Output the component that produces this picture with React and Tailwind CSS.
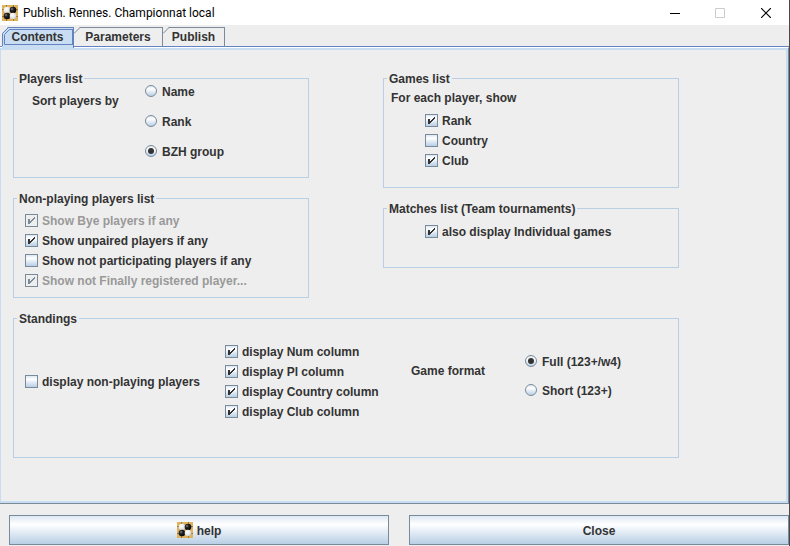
import React from "react";

function GoIcon() {
  return (
    <svg width="16" height="16" viewBox="0 0 16 16" className="shrink-0" aria-hidden="true">
      <defs>
        <radialGradient id="stoneDark" cx="0.35" cy="0.35" r="0.65">
          <stop offset="0" stopColor="#8a8a8a" />
          <stop offset="0.4" stopColor="#222" />
          <stop offset="1" stopColor="#0a0a0a" />
        </radialGradient>
        <radialGradient id="stoneLight" cx="0.4" cy="0.35" r="0.7">
          <stop offset="0" stopColor="#fff" />
          <stop offset="0.6" stopColor="#e8e8e8" />
          <stop offset="1" stopColor="#c4c4c4" />
        </radialGradient>
      </defs>
      <rect width="16" height="16" fill="#dfb25c" />
      <path d="M4.5 0v16M11.5 0v16M0 4.5h16M0 11.5h16" stroke="#a07a34" strokeWidth="1" />
      <circle cx="5" cy="5" r="3.3" fill="url(#stoneLight)" />
      <circle cx="11" cy="5" r="3.3" fill="url(#stoneDark)" />
      <circle cx="5" cy="11" r="3.3" fill="url(#stoneDark)" />
      <circle cx="11" cy="11" r="3.3" fill="url(#stoneLight)" />
    </svg>
  );
}

function Check({ label, checked, disabled }) {
  return (
    <label className="flex h-5 items-center gap-1 whitespace-nowrap has-disabled:text-[#999]">
      <span className="relative flex shrink-0">
        <input
          type="checkbox"
          defaultChecked={checked}
          disabled={disabled}
          className="peer size-[13px] appearance-none border border-[#7a8a99] bg-linear-to-b from-[#dde8f3] via-white via-30% to-[#b8cfe5] disabled:bg-none"
        />
        <svg
          width="13"
          height="13"
          viewBox="0 0 13 13"
          shapeRendering="crispEdges"
          aria-hidden="true"
          className="pointer-events-none absolute inset-0 hidden fill-[#333] peer-checked:block peer-disabled:fill-[#7a8a99]"
        >
          <path d="M3 5h2v2h1v-1h1v-1h1v-1h1v-1h1v2h-1v1h-1v1h-1v1h-1v1h-1v1h-2z" />
        </svg>
      </span>
      <span className="pt-[2px]">{label}</span>
    </label>
  );
}

function Radio({ label, name, checked, className }) {
  return (
    <label className={"flex items-center gap-[5px] whitespace-nowrap " + className}>
      <span className="relative flex shrink-0">
        <input
          type="radio"
          name={name}
          defaultChecked={checked}
          className="peer size-3 appearance-none rounded-full border border-[#7a8a99] bg-linear-to-b from-[#dde8f3] via-white via-30% to-[#b8cfe5]"
        />
        <span className="pointer-events-none absolute inset-[3px] hidden rounded-full bg-[#333] peer-checked:block" />
      </span>
      <span className="pt-[2px]">{label}</span>
    </label>
  );
}

function Group({ title, children }) {
  return (
    <fieldset className="border border-[#b8cfe5]">
      <legend className="ml-[3px] px-[2px] pt-[2px] leading-[11px]">{title}</legend>
      {children}
    </fieldset>
  );
}

function Tab({ label, selected, className }) {
  return (
    <button
      type="button"
      role="tab"
      aria-selected={selected}
      className={
        "relative flex justify-center border-t border-r leading-[18px] " +
        (selected
          ? "h-[21px] border-[#6382bf] bg-[#c8ddf2] "
          : "h-5 border-[#7a8a99] ") +
        className
      }
    >
      <svg
        width="10"
        height="21"
        viewBox="0 0 10 21"
        aria-hidden="true"
        className="absolute -top-px left-0"
        fill="none"
        stroke={selected ? "#6382bf" : "#7a8a99"}
      >
        <path d="M0 0h6L0 6z" fill="#eee" stroke="none" />
        {selected ? (
          <>
            <path d="M6.5 0.5L0.5 6.5V19" />
            <path d="M10 2.5H7.5L2.5 7.5V17.5H10" />
          </>
        ) : (
          <path d="M6 0.5L0 6.5" />
        )}
      </svg>
      {selected && (
        <span className="pointer-events-none absolute top-px right-0 left-[10px] h-4 border-y border-r border-[#6382bf]" />
      )}
      {label}
    </button>
  );
}

const buttonClass =
  "flex h-[30px] flex-1 items-center justify-center gap-1 border border-[#7a8a99] bg-linear-to-b from-[#dde8f3] via-white via-30% to-[#b8cfe5]";

export default function App() {
  return (
    <div className="min-h-screen border-r border-[#4a4a4a] bg-[#eee] font-['Liberation_Sans',Arial,sans-serif] text-xs leading-5 font-bold text-[#333]">
      <header className="flex h-[25px] items-center bg-white pl-[2px] font-[Roboto,'Open_Sans',sans-serif] font-normal text-black">
        <GoIcon />
        <h1 className="ml-[5px] flex-1">Publish. Rennes. Championnat local</h1>
        <div className="flex">
          <button type="button" aria-label="Minimize" className="flex h-6 w-[45px] items-center justify-center">
            <svg width="10" height="10" viewBox="0 0 10 10" shapeRendering="crispEdges">
              <path d="M0 5h10v1H0z" />
            </svg>
          </button>
          <button type="button" aria-label="Maximize" disabled className="flex h-6 w-[45px] items-center justify-center">
            <svg width="10" height="10" viewBox="0 0 10 10" fill="none" stroke="#ccc">
              <path d="M.5.5h9v9h-9z" />
            </svg>
          </button>
          <button type="button" aria-label="Close window" className="flex h-6 w-[47px] items-center justify-center">
            <svg width="10" height="10" viewBox="0 0 10 10" stroke="#000" strokeWidth="1.2">
              <path d="M0 0l10 10M10 0L0 10" />
            </svg>
          </button>
        </div>
      </header>

      <div role="tablist" className="flex h-[22px] border-b border-[#6382bf] pt-[2px] pl-[2px]">
        <Tab label="Contents" className="min-w-[72px]" selected />
        <Tab label="Parameters" className="min-w-[89px]" />
        <Tab label="Publish" className="min-w-[62px]" />
      </div>

      <main className="border-t border-r border-b border-[#7a8a99] border-t-white">
        <div className="border-t-2 border-r-2 border-b-2 border-l border-[#c8ddf2] px-3 pt-[22px] pb-[43px]">
          <div className="grid max-w-[666px] grid-cols-2 items-start gap-x-[74px] gap-y-[14px]">
            <div className="flex flex-col gap-[14px]">
              <Group title="Players list">
                <div className="grid grid-cols-[113px_1fr] pb-5 pl-[18px]">
                  <span className="pt-[6px]">Sort players by</span>
                  <div className="flex flex-col gap-[18px]">
                    <Radio className="h-3" name="sort" label="Name" />
                    <Radio className="h-3" name="sort" label="Rank" />
                    <Radio className="h-3" name="sort" label="BZH group" checked />
                  </div>
                </div>
              </Group>
              <Group title="Non-playing players list">
                <div className="pt-[5px] pb-[7px] pl-[11px]">
                  <Check label="Show Bye players if any" checked disabled />
                  <Check label="Show unpaired players if any" checked />
                  <Check label="Show not participating players if any" />
                  <Check label="Show not Finally registered player..." checked disabled />
                </div>
              </Group>
            </div>

            <div className="flex flex-col gap-[14px]">
              <Group title="Games list">
                <div className="pt-[3px] pb-[17px] pl-[7px]">
                  <p>For each player, show</p>
                  <div className="pt-[2px] pl-[34px]">
                    <Check label="Rank" checked />
                    <Check label="Country" />
                    <Check label="Club" checked />
                  </div>
                </div>
              </Group>
              <Group title="Matches list (Team tournaments)">
                <div className="pt-[6px] pb-[26px] pl-[41px]">
                  <Check label="also display Individual games" checked />
                </div>
              </Group>
            </div>

            <div className="col-span-2">
              <Group title="Standings">
                <div className="grid grid-cols-[200px_186px_114px_1fr] items-center pt-4 pb-9 pl-[11px]">
                  <Check label="display non-playing players" />
                  <div>
                    <Check label="display Num column" checked />
                    <Check label="display Pl column" checked />
                    <Check label="display Country column" checked />
                    <Check label="display Club column" checked />
                  </div>
                  <span className="pb-5">Game format</span>
                  <div className="flex flex-col gap-[9px] pb-3">
                    <Radio className="h-5" name="format" label="Full (123+/w4)" checked />
                    <Radio className="h-5" name="format" label="Short (123+)" />
                  </div>
                </div>
              </Group>
            </div>
          </div>
        </div>
      </main>

      <footer className="flex gap-5 pt-[11px] pb-px pl-[9px]">
        <button type="button" className={buttonClass}>
          <GoIcon />
          <span className="pt-[2px]">help</span>
        </button>
        <button type="button" className={buttonClass}>
          <span className="pt-[2px]">Close</span>
        </button>
      </footer>
    </div>
  );
}
